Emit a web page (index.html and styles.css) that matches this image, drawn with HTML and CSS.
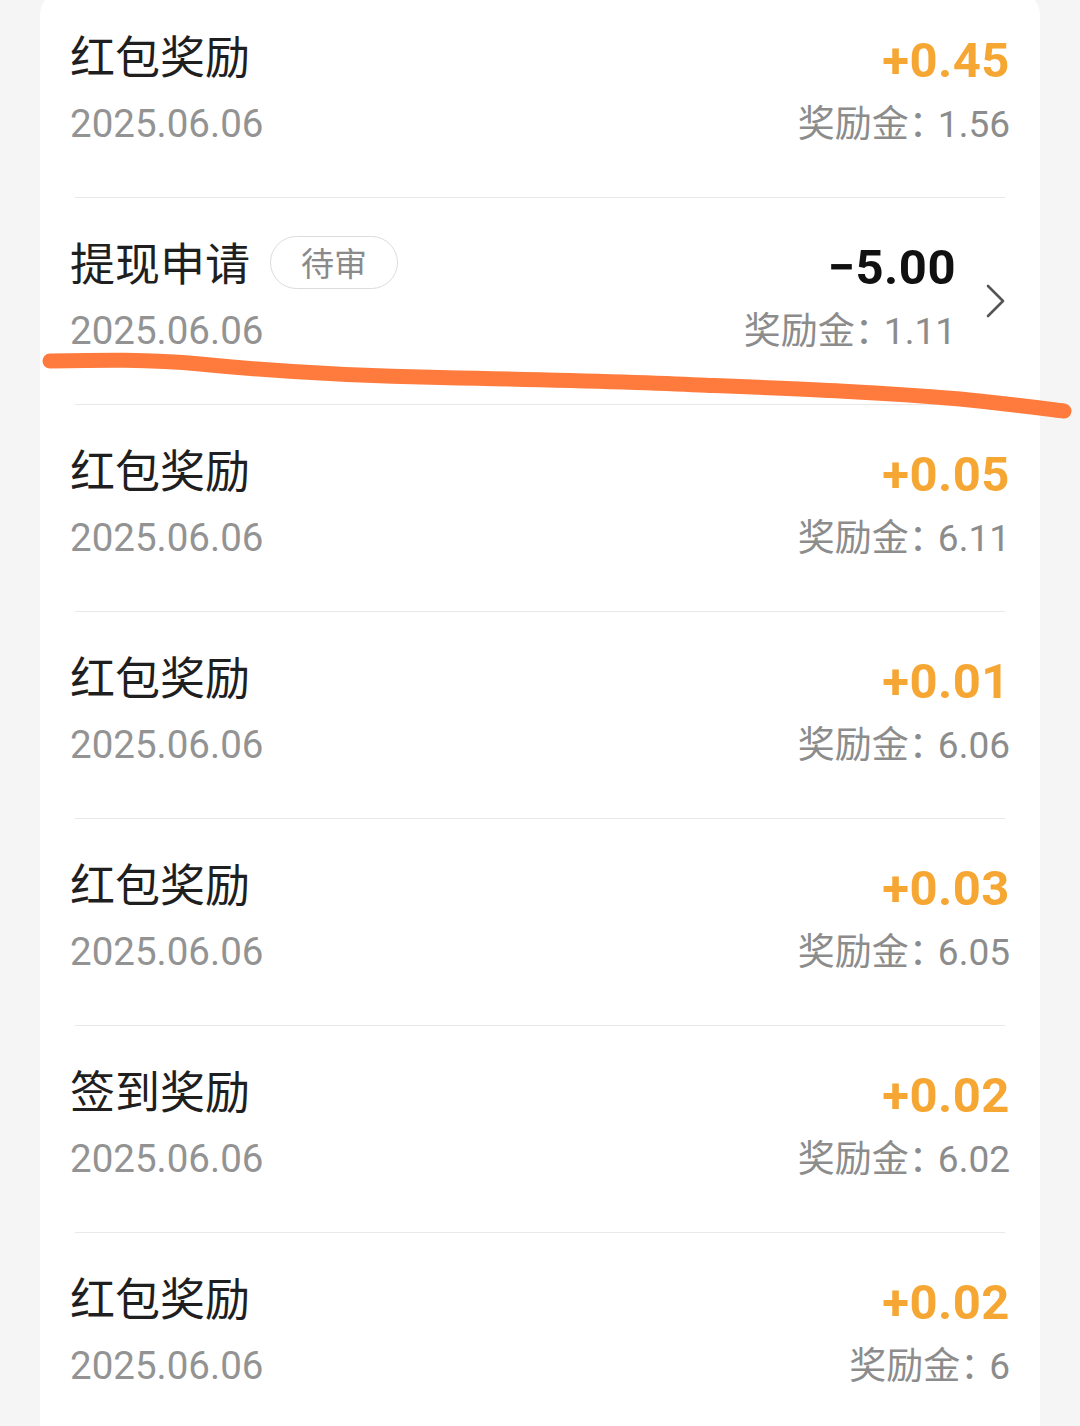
FILE: index.html
```html
<!DOCTYPE html>
<html lang="zh-CN">
<head>
<meta charset="utf-8">
<link rel="stylesheet" href="styles.css">
</head>
<body>
<div class="page">
  <div class="card">
    <div class="row">
      <div class="row-in">
        <div class="left"><div class="title-line"><span class="title">红包奖励</span></div><div class="date">2025.06.06</div></div>
        <div class="right"><div class="amount plus">+0.45</div><div class="sub">奖励金<span class="colon">：</span>1.56</div></div>
      </div>
    </div>
    <div class="row">
      <div class="row-in">
        <div class="left"><div class="title-line"><span class="title">提现申请</span><span class="badge">待审</span></div><div class="date">2025.06.06</div></div>
        <div class="right"><div class="amount minus">−5.00</div><div class="sub">奖励金<span class="colon">：</span>1.11</div></div>
        <div class="chev"><svg width="20" height="34" viewBox="0 0 20 34"><path d="M2 2 L17 17 L2 32" fill="none" stroke="#555" stroke-width="2.6" stroke-linecap="round" stroke-linejoin="round"/></svg></div>
      </div>
    </div>
    <div class="row">
      <div class="row-in">
        <div class="left"><div class="title-line"><span class="title">红包奖励</span></div><div class="date">2025.06.06</div></div>
        <div class="right"><div class="amount plus">+0.05</div><div class="sub">奖励金<span class="colon">：</span>6.11</div></div>
      </div>
    </div>
    <div class="row">
      <div class="row-in">
        <div class="left"><div class="title-line"><span class="title">红包奖励</span></div><div class="date">2025.06.06</div></div>
        <div class="right"><div class="amount plus">+0.01</div><div class="sub">奖励金<span class="colon">：</span>6.06</div></div>
      </div>
    </div>
    <div class="row">
      <div class="row-in">
        <div class="left"><div class="title-line"><span class="title">红包奖励</span></div><div class="date">2025.06.06</div></div>
        <div class="right"><div class="amount plus">+0.03</div><div class="sub">奖励金<span class="colon">：</span>6.05</div></div>
      </div>
    </div>
    <div class="row">
      <div class="row-in">
        <div class="left"><div class="title-line"><span class="title">签到奖励</span></div><div class="date">2025.06.06</div></div>
        <div class="right"><div class="amount plus">+0.02</div><div class="sub">奖励金<span class="colon">：</span>6.02</div></div>
      </div>
    </div>
    <div class="row">
      <div class="row-in">
        <div class="left"><div class="title-line"><span class="title">红包奖励</span></div><div class="date">2025.06.06</div></div>
        <div class="right"><div class="amount plus">+0.02</div><div class="sub">奖励金<span class="colon">：</span>6</div></div>
      </div>
    </div>
  </div>
  <svg class="scribble" width="1080" height="1426" viewBox="0 0 1080 1426">
    <path d="M50 361 C 100 360, 150 359, 200 364 C 260 370, 350 376, 440 377.5 C 560 380, 640 382, 700 385 C 800 389, 880 392, 960 399 C 1010 404, 1040 408, 1064 411" fill="none" stroke="#ff7b3d" stroke-width="15" stroke-linecap="round"/>
  </svg>
</div>
</body>
</html>
```

FILE: styles.css
```css
html, body {
  margin: 0;
  padding: 0;
  background: #f5f5f5;
}
.page {
  position: relative;
  width: 1080px;
  height: 1426px;
  overflow: hidden;
}
.card {
  margin: -9px 40px 0 40px;
  background: #ffffff;
  border-radius: 24px 24px 0 0;
  padding-bottom: 40px;
}
.row {
  margin: 0 35px;
  border-bottom: 1px solid #e8e8e8;
}
.row-in {
  margin: 0 -5px;
  height: 206px;
  box-sizing: border-box;
  padding-top: 34px;
  display: flex;
  align-items: flex-start;
}
.left {
  flex: 1;
  display: flex;
  flex-direction: column;
}
.title-line {
  display: flex;
  align-items: center;
  height: 60px;
}
.title {
  font-family: "Noto Sans CJK SC", sans-serif;
  font-size: 45px;
  line-height: 60px;
  color: #1f1f1f;
}
.badge {
  margin-left: 20px;
  height: 51px;
  padding: 0 30px;
  border: 1px solid #dcdcdc;
  border-radius: 27px;
  font-family: "Noto Sans CJK SC", sans-serif;
  font-size: 33px;
  line-height: 51px;
  color: #8a8a8a;
}
.date {
  margin-top: 14px;
  font-family: Roboto, sans-serif;
  font-size: 38.5px;
  line-height: 50px;
  color: #939393;
}
.right {
  display: flex;
  flex-direction: column;
  align-items: flex-end;
}
.amount {
  margin-top: 6px;
  font-family: Roboto, sans-serif;
  font-weight: 700;
  font-size: 49px;
  letter-spacing: 0.5px;
  line-height: 60px;
}
.amount.plus { color: #f6a733; }
.amount.minus { color: #111111; }
.sub {
  margin-top: 9px;
  font-family: Roboto, "Noto Sans CJK SC", sans-serif;
  font-size: 37px;
  line-height: 50px;
  color: #8c8c8c;
}
.colon {
  letter-spacing: -12px;
  margin-right: 4px;
}
.chev {
  align-self: center;
  margin-left: 30px;
  margin-right: 4px;
  margin-top: -34px;
  width: 20px;
  height: 34px;
}
.scribble {
  position: absolute;
  left: 0;
  top: 0;
  pointer-events: none;
}
```
